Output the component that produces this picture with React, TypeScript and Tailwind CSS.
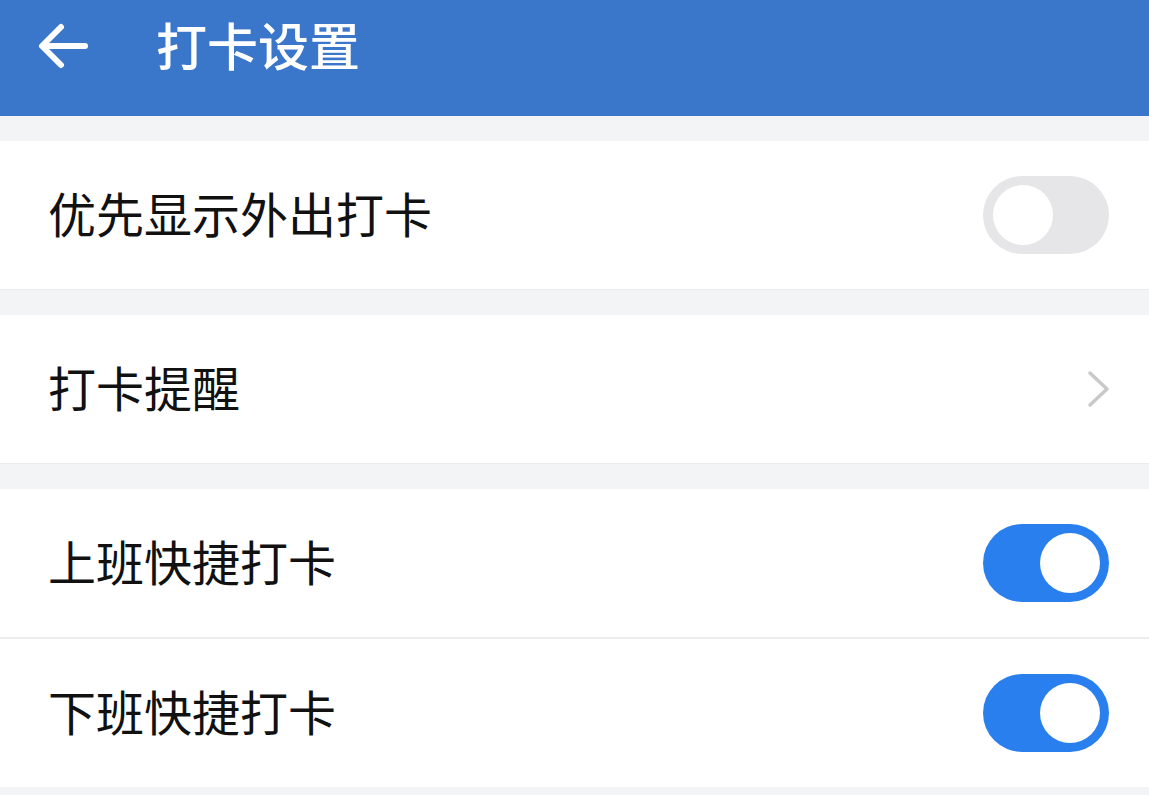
import React, { useState } from 'react';

const font = { fontFamily: '"Noto Sans CJK SC", "Noto Sans", sans-serif' };

function Toggle({ on, onClick }: { on: boolean; onClick: () => void }) {
  return (
    <button
      onClick={onClick}
      className={`relative h-[78px] w-[126px] shrink-0 rounded-full ${on ? 'bg-[#2a7fef]' : 'bg-[#e6e6e8]'}`}
    >
      <span
        className={`absolute top-[9px] h-[60px] w-[60px] rounded-full bg-white ${on ? 'left-[57px]' : 'left-[10px]'}`}
      />
    </button>
  );
}

function Row({ label, children, border = false }: { label: string; children: React.ReactNode; border?: boolean }) {
  return (
    <div className={`flex items-center justify-between bg-white pl-[48px] pr-[40px] ${border ? 'h-[150px] border-b-2 border-[#ececec]' : 'h-[148px]'}`}>
      <span className="mb-[6px] text-[48px] leading-none text-[#111]">{label}</span>
      {children}
    </div>
  );
}

export default function App() {
  const [outFirst, setOutFirst] = useState(false);
  const [onWork, setOnWork] = useState(true);
  const [offWork, setOffWork] = useState(true);

  return (
    <div className="min-h-[795px] w-full bg-[#f3f4f6]" style={font}>
      <header className="flex h-[116px] items-center bg-[#3a76c9] pb-[24px]">
        <svg width="52" height="48" viewBox="0 0 52 48" className="ml-[37px]" fill="none" stroke="white" strokeWidth="6" strokeLinecap="round" strokeLinejoin="round">
          <path d="M48 24H6M24 5L5 24l19 19" />
        </svg>
        <h1 className="mb-[4px] ml-[67px] text-[51px] font-medium leading-none text-white">打卡设置</h1>
      </header>

      <div className="pt-[25px]">
        <div className="border-b border-[#ececec]">
          <Row label="优先显示外出打卡">
            <Toggle on={outFirst} onClick={() => setOutFirst(!outFirst)} />
          </Row>
        </div>
      </div>

      <div className="pt-[25px]">
        <div className="border-b border-[#ececec]">
          <Row label="打卡提醒">
            <svg width="24" height="38" viewBox="0 0 24 38" fill="none" stroke="#c9c9c9" strokeWidth="3.5" strokeLinecap="round" strokeLinejoin="round" className="-mr-[1px]">
              <path d="M4 3l17 16L4 35" />
            </svg>
          </Row>
        </div>
      </div>

      <div className="pt-[25px]">
        <Row label="上班快捷打卡" border>
          <Toggle on={onWork} onClick={() => setOnWork(!onWork)} />
        </Row>
        <Row label="下班快捷打卡">
          <Toggle on={offWork} onClick={() => setOffWork(!offWork)} />
        </Row>
      </div>
    </div>
  );
}
